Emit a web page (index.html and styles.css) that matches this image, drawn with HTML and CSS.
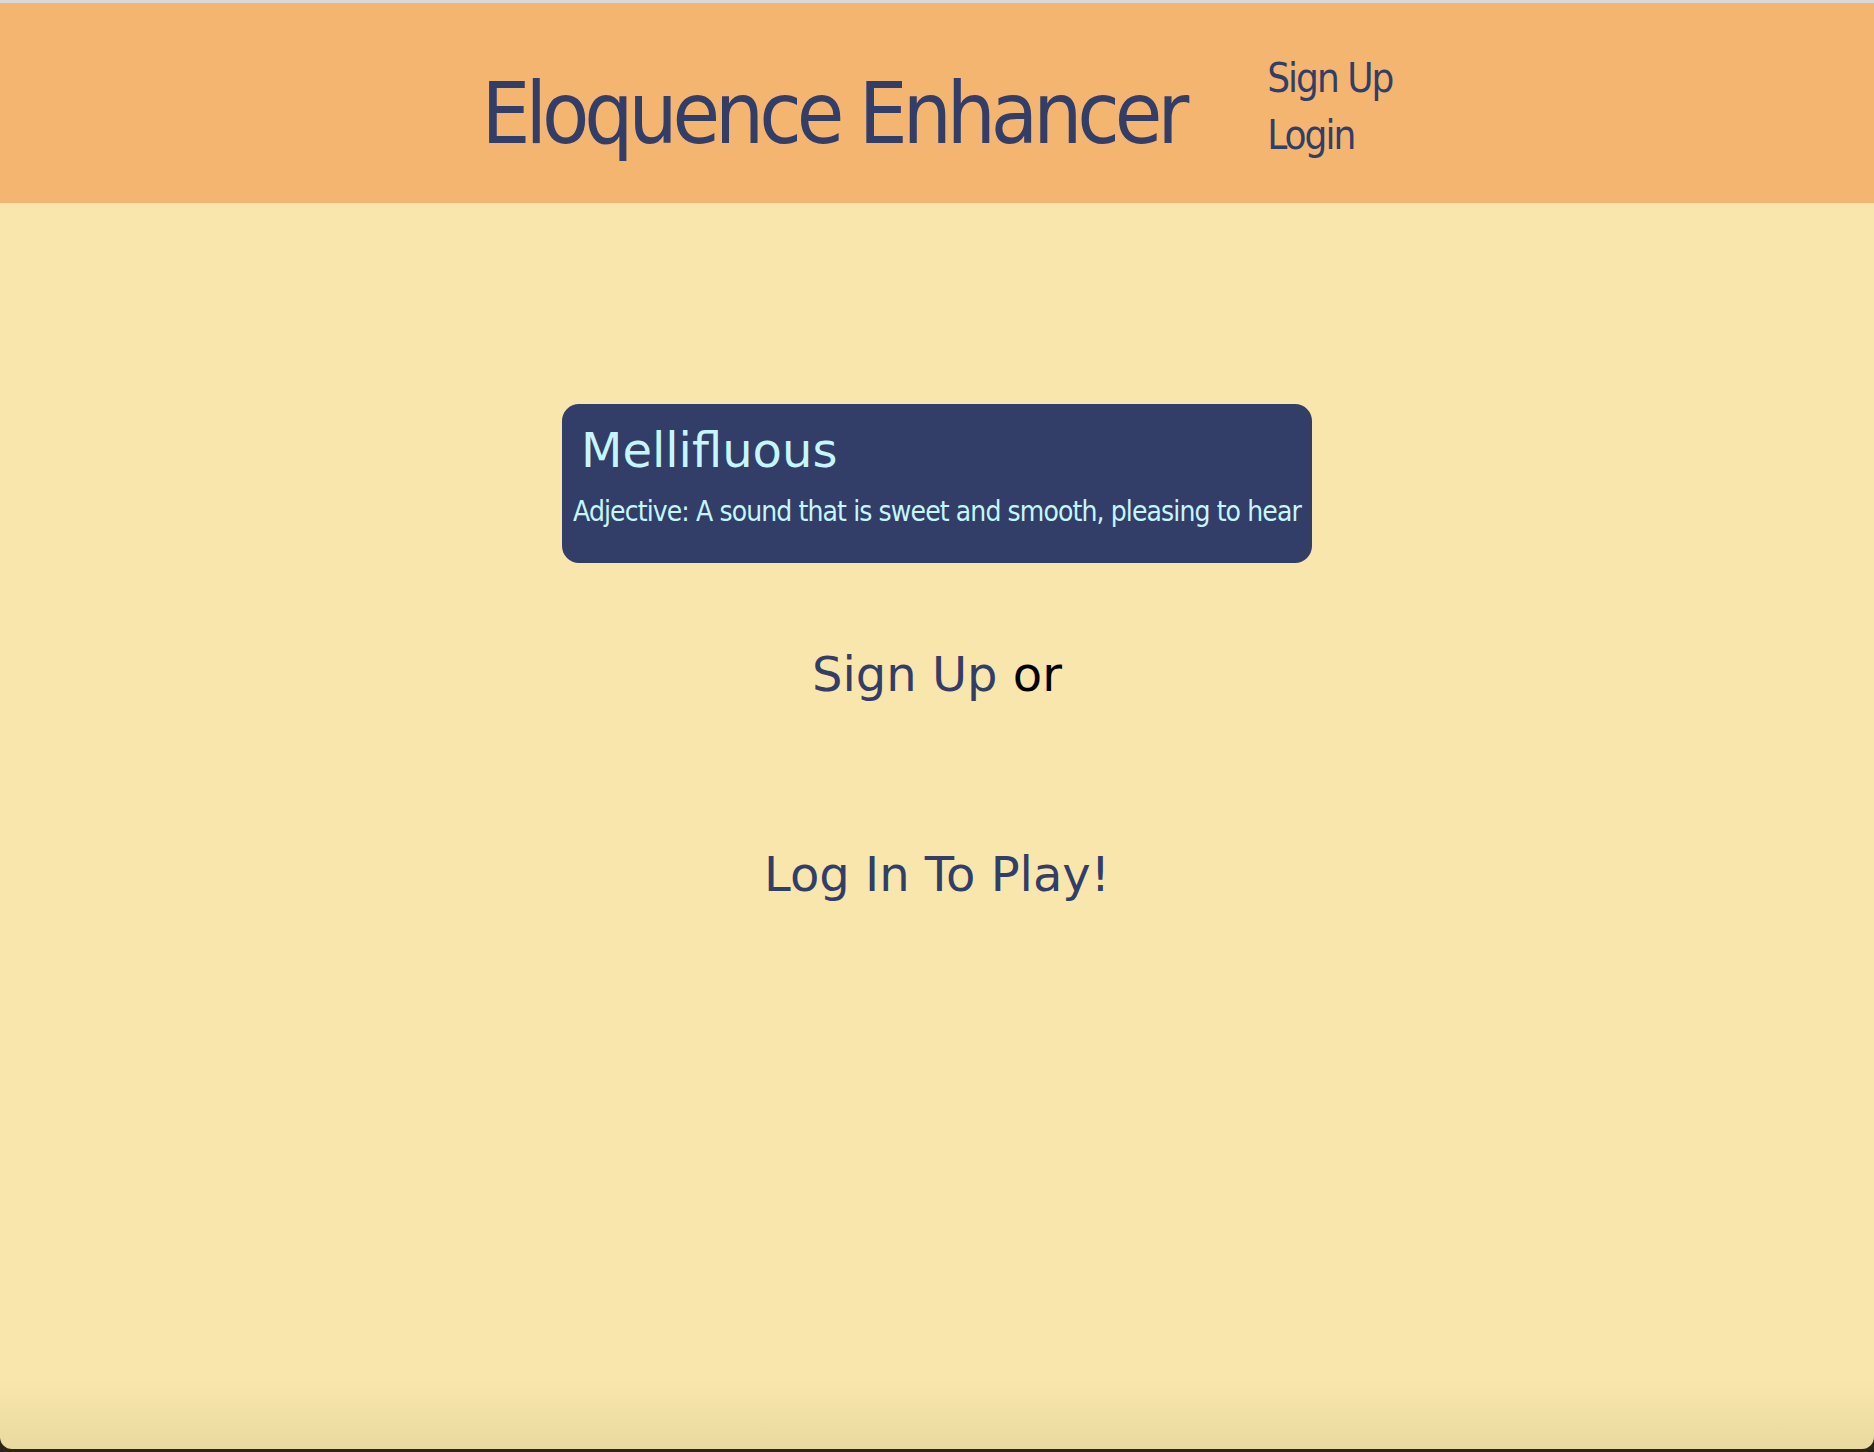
FILE: index.html
```html
<!DOCTYPE html>
<html lang="en">
<head>
<meta charset="utf-8">
<title>Eloquence Enhancer</title>
<link rel="stylesheet" href="styles.css">
</head>
<body>
<div class="window">
  <div class="topline"></div>
  <header class="header">
    <h1 class="title">Eloquence Enhancer</h1>
    <nav class="nav">
      <a class="nav-link" href="#">Sign Up</a>
      <a class="nav-link" href="#">Login</a>
    </nav>
  </header>
  <main class="main">
    <section class="card">
      <h2 class="word">Mellifluous</h2>
      <p class="definition">Adjective: A sound that is sweet and smooth, pleasing to hear</p>
    </section>
    <p class="signup"><a class="link" href="#">Sign Up</a> or</p>
    <p class="login"><a class="link" href="#">Log In To Play!</a></p>
  </main>
</div>
</body>
</html>
```

FILE: styles.css
```css
html, body {
  margin: 0;
  padding: 0;
}
body {
  background: #2b2418;
  font-family: "DejaVu Sans", sans-serif;
}
.window {
  min-height: 1449px;
  display: flex;
  flex-direction: column;
  background: linear-gradient(to bottom, #F9E6AC 0, #F9E6AC calc(100% - 70px), #E9DAA0 100%);
  border-radius: 0 0 12px 12px;
  overflow: hidden;
}
.topline {
  height: 3px;
  background: #d9d9d9;
}
.header {
  height: 200px;
  background: #F4B570;
  display: flex;
  justify-content: center;
  align-items: center;
  gap: 83px;
}
.title {
  margin: 19px 0 0 0;
  font-family: "DejaVu Sans Condensed", "DejaVu Sans", sans-serif;
  font-stretch: condensed;
  font-weight: normal;
  font-size: 86px;
  line-height: 86px;
  letter-spacing: -5px;
  color: #323D68;
}
.nav {
  margin-top: 8px;
  display: flex;
  flex-direction: column;
}
.nav-link {
  font-family: "DejaVu Sans Condensed", "DejaVu Sans", sans-serif;
  font-stretch: condensed;
  font-size: 40px;
  line-height: 57px;
  letter-spacing: -2px;
  color: #323D68;
  text-decoration: none;
}
.main {
  display: flex;
  flex-direction: column;
  align-items: center;
  padding-top: 201px;
}
.card {
  width: 750px;
  box-sizing: border-box;
  background: #323D68;
  border-radius: 17px;
  padding: 18px 8px 31px 8px;
}
.word {
  margin: 0;
  padding-left: 11px;
  font-family: "DejaVu Sans", sans-serif;
  font-weight: normal;
  font-size: 48px;
  line-height: 56px;
  color: #C5F6FD;
}
.definition {
  margin: 14px 0 0 0;
  text-align: center;
  font-family: "DejaVu Sans Condensed", "DejaVu Sans", sans-serif;
  font-stretch: condensed;
  font-size: 28px;
  line-height: 40px;
  letter-spacing: -0.9px;
  color: #C5F6FD;
  white-space: nowrap;
}
.signup {
  margin: 83px 0 0 0;
  font-size: 48px;
  line-height: 56px;
  color: #000;
}
.login {
  margin: 144px 0 0 0;
  font-size: 48px;
  line-height: 56px;
}
.link {
  color: #323D68;
  text-decoration: none;
}
```
